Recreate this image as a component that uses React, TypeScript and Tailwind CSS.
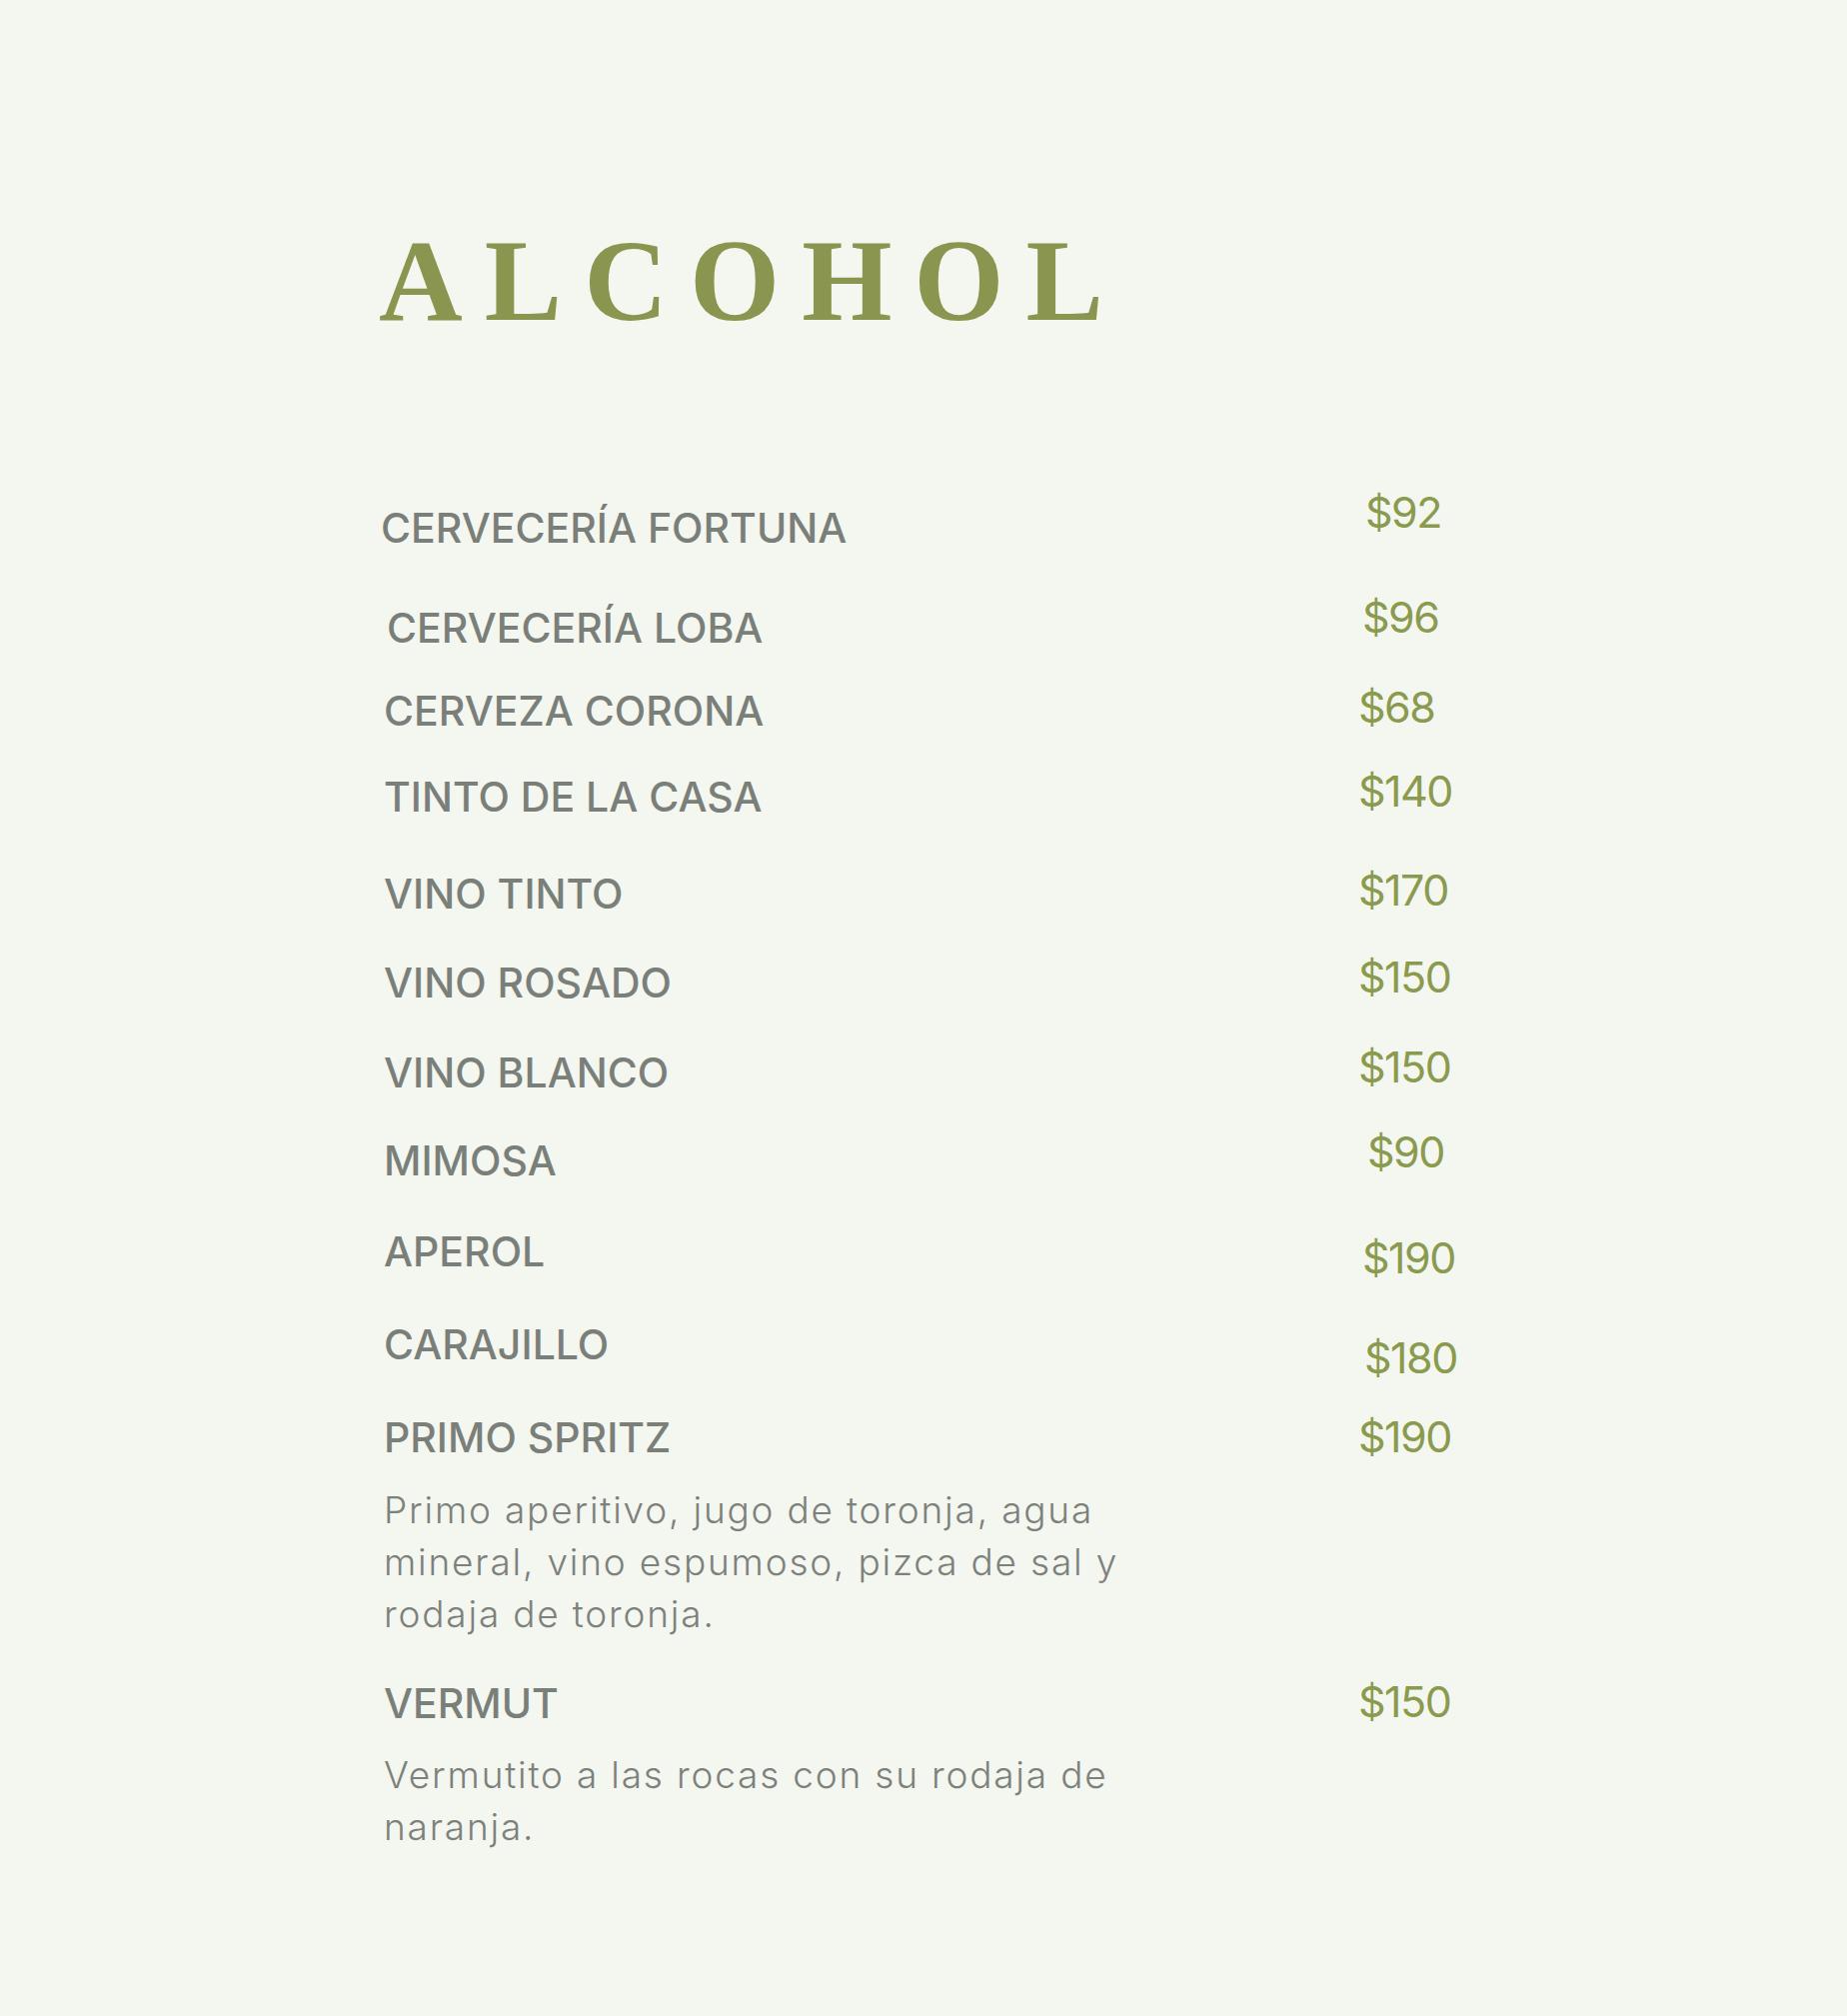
import React from "react";

type Row = {
  name: string;
  price: string;
  rowMt: string;
  nameMt: string;
  nameMl: string;
  priceMt: string;
  priceMl: string;
};

const rows: Row[] = [
  { name: "CERVECERÍA FORTUNA", price: "$92", rowMt: "mt-[152px]", nameMt: "mt-[17px]", nameMl: "ml-[2px]", priceMt: "mt-0", priceMl: "ml-[7px]" },
  { name: "CERVECERÍA LOBA", price: "$96", rowMt: "mt-[47px]", nameMt: "mt-[12px]", nameMl: "ml-[8px]", priceMt: "mt-0", priceMl: "ml-[4px]" },
  { name: "CERVEZA CORONA", price: "$68", rowMt: "mt-[37px]", nameMt: "mt-[5px]", nameMl: "ml-[5px]", priceMt: "mt-0", priceMl: "ml-0" },
  { name: "TINTO DE LA CASA", price: "$140", rowMt: "mt-[38px]", nameMt: "mt-[7px]", nameMl: "ml-[5px]", priceMt: "mt-0", priceMl: "ml-0" },
  { name: "VINO TINTO", price: "$170", rowMt: "mt-[51px]", nameMt: "mt-[5px]", nameMl: "ml-[5px]", priceMt: "mt-0", priceMl: "ml-0" },
  { name: "VINO ROSADO", price: "$150", rowMt: "mt-[41px]", nameMt: "mt-[7px]", nameMl: "ml-[5px]", priceMt: "mt-0", priceMl: "ml-0" },
  { name: "VINO BLANCO", price: "$150", rowMt: "mt-[42px]", nameMt: "mt-[7px]", nameMl: "ml-[5px]", priceMt: "mt-0", priceMl: "ml-0" },
  { name: "MIMOSA", price: "$90", rowMt: "mt-[37px]", nameMt: "mt-[10px]", nameMl: "ml-[5px]", priceMt: "mt-0", priceMl: "ml-[9px]" },
  { name: "APEROL", price: "$190", rowMt: "mt-[50px]", nameMt: "mt-0", nameMl: "ml-[5px]", priceMt: "mt-[5px]", priceMl: "ml-[4px]" },
  { name: "CARAJILLO", price: "$180", rowMt: "mt-[45px]", nameMt: "mt-0", nameMl: "ml-[5px]", priceMt: "mt-[12px]", priceMl: "ml-[6px]" },
  { name: "PRIMO SPRITZ", price: "$190", rowMt: "mt-[36px]", nameMt: "mt-[2px]", nameMl: "ml-[5px]", priceMt: "mt-0", priceMl: "ml-0" },
];

function ItemRow({ r }: { r: Row }) {
  return (
    <div className={`flex items-start ${r.rowMt}`}>
      <div className="w-[980px] shrink-0">
        <div
          className={`${r.nameMt} ${r.nameMl} text-[41px] leading-none font-medium text-[#7a7f79] tracking-[0px]`}
        >
          {r.name}
        </div>
      </div>
      <div
        className={`${r.priceMt} ${r.priceMl} text-[43px] leading-none font-normal text-[#8a9a4e] tracking-[-1.5px]`}
      >
        {r.price}
      </div>
    </div>
  );
}

export default function App() {
  return (
    <div className="min-h-[2017px] w-full bg-[#f4f6f0] pl-[379px] pt-[223px] font-['Inter',_'Liberation_Sans',_sans-serif]">
      <h1 className="text-[116px] leading-none font-bold text-[#8a954f] tracking-[22px] font-['Liberation_Serif',_serif]">
        ALCOHOL
      </h1>
      {rows.map((r, i) => (
        <ItemRow key={i} r={r} />
      ))}
      <p className="mt-[26px] ml-[5px] text-[37px] leading-[52px] font-light text-[#7d817c] tracking-[1.8px]">
        Primo aperitivo, jugo de toronja, agua
        <br />
        mineral, vino espumoso, pizca de sal y
        <br />
        rodaja de toronja.
      </p>
      <div className="flex items-start mt-[40px]">
        <div className="w-[980px] shrink-0">
          <div className="mt-[3px] ml-[5px] text-[41px] leading-none font-medium text-[#7a7f79] tracking-[0px]">
            VERMUT
          </div>
        </div>
        <div className="text-[43px] leading-none font-normal text-[#8a9a4e] tracking-[-1.5px]">$150</div>
      </div>
      <p className="mt-[25px] ml-[5px] text-[37px] leading-[52px] font-light text-[#7d817c] tracking-[1.8px]">
        Vermutito a las rocas con su rodaja de
        <br />
        naranja.
      </p>
    </div>
  );
}
